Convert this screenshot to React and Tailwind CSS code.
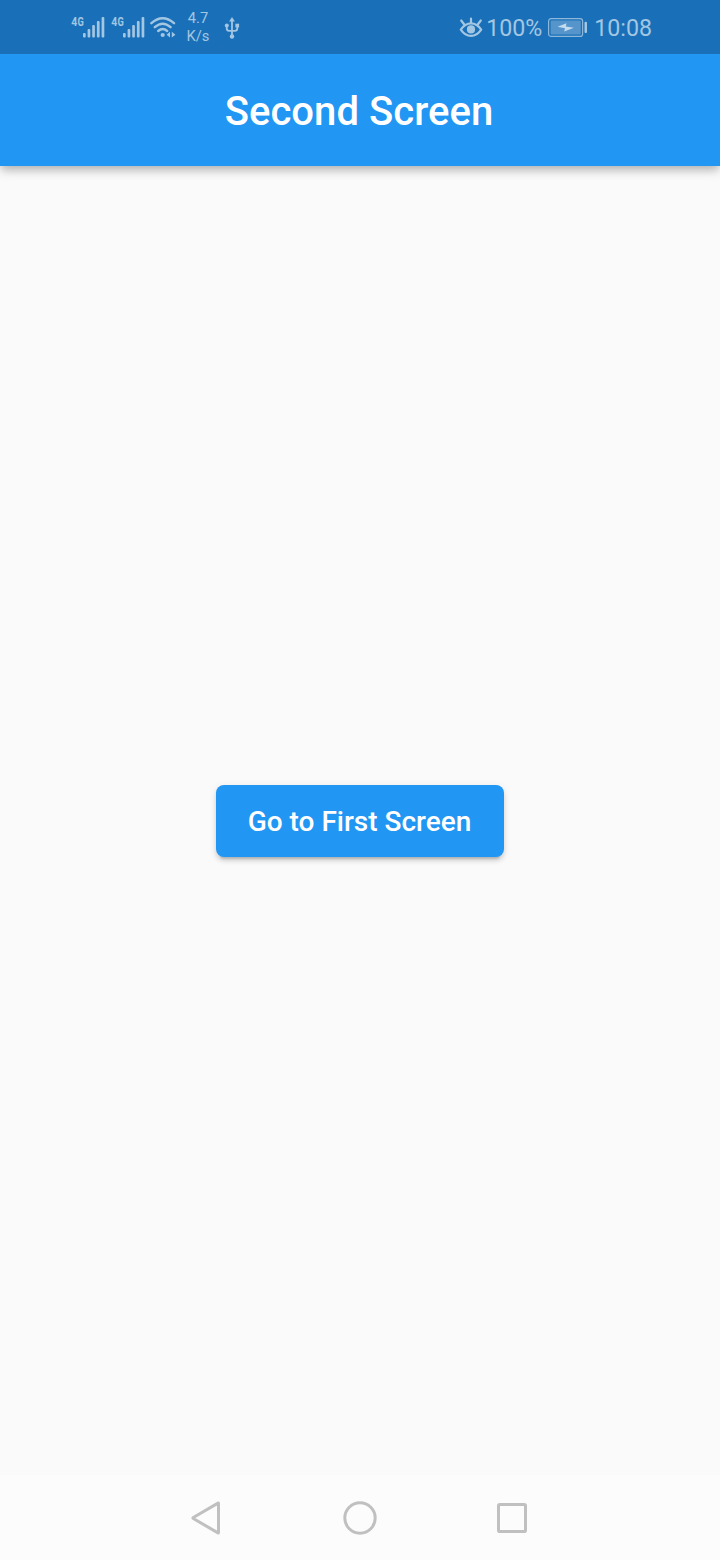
const TINT = '#a3c6e2';

function Signal() {
  return (
    <svg className="h-7 w-[34px] shrink-0" viewBox="0 0 34 28" fill={TINT}>
      <g fontSize="12.5" fontWeight="700" fontFamily="Roboto, sans-serif">
        <text x="0.3" y="11.7" textLength="6" lengthAdjust="spacingAndGlyphs">4</text>
        <text x="6.4" y="11.7" textLength="6.3" lengthAdjust="spacingAndGlyphs">G</text>
      </g>
      <rect x="12" y="19" width="2.7" height="4.5" rx="1" />
      <rect x="16.6" y="15" width="2.7" height="8.5" rx="1" />
      <rect x="21.2" y="11" width="2.7" height="12.5" rx="1" />
      <rect x="25.9" y="7" width="2.7" height="16.5" rx="1" />
      <rect x="30.6" y="3" width="2.7" height="20.5" rx="1" />
    </svg>
  );
}

function Wifi() {
  return (
    <svg className="ml-[5px] h-7 w-[26px] shrink-0" viewBox="0 0 26 28" fill="none" stroke={TINT} strokeWidth="2.4" strokeLinecap="round">
      <path d="M1.4 9.2Q12.7 -0.8 24 9.2" />
      <path d="M4.8 13.2Q12.7 6.2 20.6 13.2" />
      <path d="M8.2 17Q12.7 13 17.2 17" />
      <circle cx="12.7" cy="21" r="2.1" fill={TINT} stroke="none" />
      <path d="M20 17.8v5.8l-3.4-2.9ZM21.8 17.8v5.8l3.6-2.9Z" fill={TINT} stroke="none" />
    </svg>
  );
}

function Usb() {
  return (
    <svg className="ml-[14px] h-7 w-4 shrink-0" viewBox="0 0 16 28" fill="none" stroke={TINT} strokeWidth="1.8">
      <path d="M8 6v16M2.7 11v3.2q0 2.6 2.6 2.6h5.4q2.6 0 2.6-2.6V11" />
      <path d="M8 3l2.9 4.5H5.1Z" fill={TINT} stroke="none" />
      <circle cx="2.8" cy="11.5" r="2" fill={TINT} stroke="none" />
      <rect x="11.4" y="9.7" width="3.7" height="3.7" fill={TINT} stroke="none" />
      <circle cx="8" cy="22.5" r="2.2" fill={TINT} stroke="none" />
    </svg>
  );
}

function Eye() {
  return (
    <svg className="h-7 w-6 shrink-0" viewBox="0 0 24 28" fill="none" stroke={TINT} strokeWidth="2.2" strokeLinecap="round" strokeLinejoin="round">
      <path d="M1.8 15.6Q6 9.3 12 9.3T22.2 15.6Q18 21.9 12 21.9T1.8 15.6Z" />
      <circle cx="12" cy="15.4" r="4.1" fill={TINT} stroke="none" />
      <path d="M12 4.5v4M2.2 6.5l3.1 4M21.8 6.5l-3.1 4" />
    </svg>
  );
}

function Battery() {
  return (
    <svg className="ml-[6px] h-7 w-10 shrink-0" viewBox="0 0 40 28">
      <rect x="0.6" y="4.6" width="34" height="17.8" rx="2.5" fill="none" stroke="#8db8dc" strokeWidth="1.2" />
      <rect x="2.6" y="6.5" width="30.2" height="14" rx="1" fill="#5695cb" />
      <path d="M9.5 12.8l9-3.6-.7 3.2 8.1 1.4-9.7 3.8.8-3.4Z" fill="#c5dcee" />
      <rect x="36.5" y="7.8" width="2.5" height="11.2" rx="1" fill={TINT} />
    </svg>
  );
}

function StatusBar() {
  return (
    <header className="relative z-20 flex h-[54px] shrink-0 items-center justify-between bg-[#1a70b8] pt-[2px] pr-[68px] pl-[71px] text-[#a3c6e2]">
      <div className="flex items-center">
        <div className="flex gap-[6px]">
          <Signal />
          <Signal />
        </div>
        <Wifi />
        <div className="mb-[2px] ml-[10px] w-6 text-center text-[14.7px] leading-[18px]">
          <div>4.7</div>
          <div>K/s</div>
        </div>
        <Usb />
      </div>
      <div className="flex items-center text-[23.2px] leading-7">
        <Eye />
        <span className="ml-[3px]">100%</span>
        <Battery />
        <span className="ml-[6px]">10:08</span>
      </div>
    </header>
  );
}

function NavigationBar() {
  return (
    <nav className="flex h-[85px] shrink-0 items-center justify-center gap-[116px] bg-[#fcfcfc]">
      <svg className="size-9" viewBox="0 0 36 36" fill="none" stroke="#c0c0c0" strokeWidth="3" strokeLinejoin="round">
        <path d="M28.5 3.3v29.4Q28.5 33.2 28 32.9L3.3 18.5Q2.5 18 3.3 17.5L28 3.1Q28.5 2.8 28.5 3.3Z" />
      </svg>
      <svg className="size-9" viewBox="0 0 36 36" fill="none" stroke="#c0c0c0" strokeWidth="3">
        <circle cx="18" cy="18" r="15.2" />
      </svg>
      <svg className="size-9" viewBox="0 0 36 36" fill="none" stroke="#c0c0c0" strokeWidth="3">
        <rect x="4.5" y="4.5" width="27" height="27" rx="1.3" />
      </svg>
    </nav>
  );
}

export default function App() {
  return (
    <div className="flex h-[1560px] w-[720px] flex-col bg-[#fafafa] font-['Roboto',sans-serif]">
      <StatusBar />
      <div className="z-10 flex h-28 shrink-0 items-center justify-center bg-[#2196f3] pt-1 pr-[2px] shadow-[0_4px_8px_-2px_rgba(0,0,0,0.18),0_6px_10px_0_rgba(0,0,0,0.1),0_2px_14px_0_rgba(0,0,0,0.08)]">
        <h1 className="text-[40px] leading-none font-medium tracking-[0.05px] text-white">Second Screen</h1>
      </div>
      <main className="flex grow items-start justify-center pt-[619px]">
        <button className="h-[72px] w-72 rounded-lg bg-[#2196f3] pt-[2px] pr-px text-[28px] leading-none font-medium whitespace-nowrap text-white shadow-[0_6px_2px_-4px_rgba(0,0,0,0.14),0_4px_4px_0_rgba(0,0,0,0.11),0_2px_8px_0_rgba(0,0,0,0.09)]">
          Go to First Screen
        </button>
      </main>
      <NavigationBar />
    </div>
  );
}
